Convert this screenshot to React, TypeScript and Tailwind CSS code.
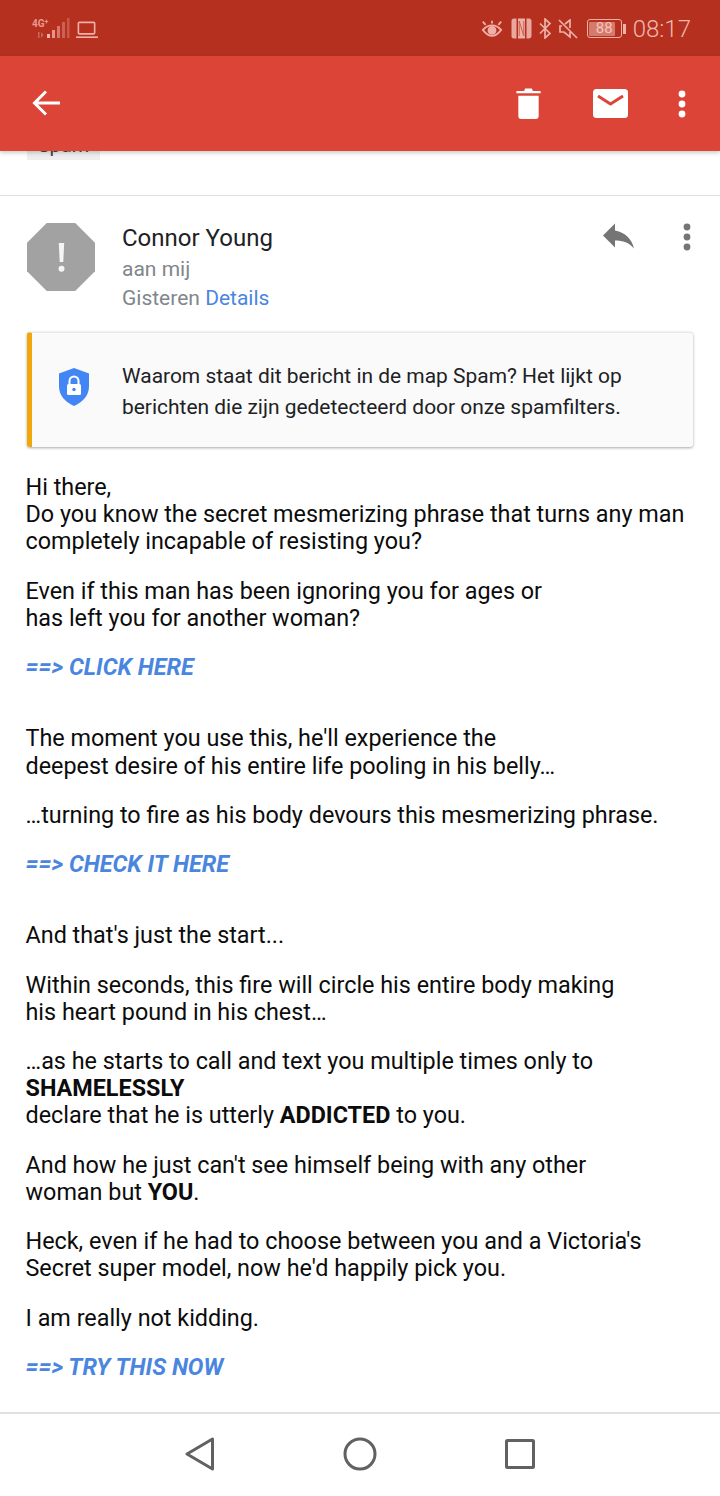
import React from "react";

const Dots = ({ className, fill }: { className: string; fill: string }) => (
  <svg viewBox="0 0 8 28" className={className} fill={fill}>
    <circle cx="4" cy="4" r="3.4" />
    <circle cx="4" cy="14" r="3.4" />
    <circle cx="4" cy="24" r="3.4" />
  </svg>
);

const StatusLeft = () => (
  <div className="flex items-end gap-[6px] ml-[32px] mt-[17px]">
    <svg width="38" height="22" viewBox="0 0 38 22">
      <text x="0" y="10" fontSize="10" fontWeight="700" fill="#e8998d" fontFamily="Roboto, sans-serif">4G</text>
      <text x="12.500" y="7" fontSize="7" fontWeight="700" fill="#e8998d" fontFamily="Roboto, sans-serif">+</text>
      <path d="M6 15h1.500v6H6zM9 15l2.500 3-2.500 3z" fill="#c96a5c" />
      <rect x="15" y="17" width="3" height="4" fill="#efb9b0" />
      <rect x="20" y="13" width="3" height="8" fill="#e59488" />
      <rect x="25" y="9" width="3" height="12" fill="#d9776a" />
      <rect x="30" y="5" width="3" height="16" fill="#cc6253" />
      <rect x="35" y="1" width="2.500" height="20" fill="#c8594a" />
    </svg>
    <svg width="22" height="18" viewBox="0 0 23 18" fill="none" stroke="#eeb0a7" strokeWidth="1.700">
      <rect x="2.500" y="1" width="17" height="12" rx="1" />
      <path d="M0 16.500h23" />
    </svg>
  </div>
);

const StatusRight = () => (
  <div className="flex items-center ml-auto mr-[29px] h-full pt-[1px]">
    <svg width="22" height="18" viewBox="0 0 24 18" fill="none" stroke="#eeb0a7" strokeWidth="2" className="mr-[8px]">
      <path d="M2 10C5 6.500 8 5 12 5s7 1.500 10 5C19 14 16 16.500 12 16.500S5 14 2 10z" />
      <circle cx="12" cy="10.500" r="3.800" fill="#eeb0a7" />
      <path d="M2 1l3 3.500M12 0v3M22 1l-3 3.500" />
    </svg>
    <svg width="21" height="21" viewBox="0 0 21 21" className="mr-[6px]">
      <path d="M3 .5h2.500v20H3A2.500 2.500 0 0 1 .5 18V3A2.500 2.500 0 0 1 3 .5zM18 .5h-2.500v20H18a2.500 2.500 0 0 0 2.500-2.500V3A2.500 2.500 0 0 0 18 .5z" fill="#e9a79d" />
      <rect x="7" y=".5" width="7" height="20" fill="#eeb0a7" />
      <path d="M8.200 3v15M12.800 3v15M8.200 3l4.600 15" fill="none" stroke="#c9604f" strokeWidth="1" />
    </svg>
    <svg width="14" height="21" viewBox="0 0 14 20" fill="none" stroke="#eeb0a7" strokeWidth="1.700" className="mr-[6px]">
      <path d="M2 5l10 10-5 4.500V.5L12 5 2 15" />
    </svg>
    <svg width="20" height="20" viewBox="0 0 20 20" fill="none" stroke="#eeb0a7" strokeWidth="1.700" className="mr-[9px]">
      <path d="M1 1l18 18M4 7H2v6h4l6 5v-5M7 5l5-4v8" />
    </svg>
    <div className="w-[35px] h-[19px] rounded-[3px] border border-[#eeb0a7] p-[1.500px] mr-[1px]">
      <div className="w-[26px] h-full bg-[#d67a6c] rounded-[1px] flex items-center justify-center text-[15px] leading-none text-[#f3c4bc] font-['Roboto',sans-serif]">
        <span className="ml-[4px]">88</span>
      </div>
    </div>
    <div className="w-[3px] h-[10px] bg-[#eeb0a7] mr-[7px]" />
    <span className="text-[24px] leading-none font-light text-[#f0b8af] font-['Roboto',sans-serif]">08:17</span>
  </div>
);

const Spam = () => (
  <div className="relative z-0 h-[66px] border-b border-[#e0e0e0]">
    <div className="ml-[27px] w-[73px] h-[30px] -mt-[21px] bg-[#eeeeee] flex items-center justify-center text-[20px] text-[#444444]">
      Spam
    </div>
  </div>
);

const Sender = () => (
  <div className="flex pl-[27px] pr-[29.500px] pt-[27px]">
    <div className="relative w-[68px] h-[68px] bg-[#a2a2a2] [clip-path:polygon(29%_0,71%_0,100%_29%,100%_71%,71%_100%,29%_100%,0_71%,0_29%)] flex items-center justify-center">
      <svg width="7" height="29" viewBox="0 0 7 29" fill="#f5f5f5">
        <path d="M.8 0h5.400l-.9 19H1.700z" />
        <circle cx="3.500" cy="25.800" r="3" />
      </svg>
    </div>
    <div className="ml-[27px] flex-1 -mt-[1px]">
      <div className="text-[24px] leading-[32px] text-[#202124]">Connor Young</div>
      <div className="text-[21px] leading-[29px] text-[#80868b] mt-[1px]">aan mij</div>
      <div className="text-[21px] leading-[29px] mt-0 text-[#80868b]">
        Gisteren <span className="text-[#4a86e0]">Details</span>
      </div>
    </div>
    <div className="flex items-start -mt-[1px]">
      <svg width="31" height="26" viewBox="0 0 31 25" fill="#757575" className="mt-[1px]">
        <path d="M12 0L0 12l12 12v-7c8 0 14 2 19 8-2-9-8-16-19-18z" />
      </svg>
      <Dots className="w-[8px] h-[28px] ml-[49px] mt-[1px]" fill="#757575" />
    </div>
  </div>
);

const Warning = () => (
  <div className="mx-[27px] mt-[19px] h-[115px] flex items-center bg-[#fafafa] rounded-[3px] border-l-[5px] border-l-[#f0a70a] border-t border-t-[#e8e8e8] shadow-[0_1px_3px_rgba(0,0,0,0.35)]">
    <svg width="30" height="38" viewBox="0 0 30 38" className="ml-[27px] shrink-0 mb-[6px]">
      <path d="M15 0l15 5.500v13C30 28 23 34.500 15 38 7 34.500 0 28 0 18.500v-13z" fill="#4285f4" />
      <rect x="8" y="16" width="14" height="11" rx="1.500" fill="#ffffff" />
      <path d="M10.500 16v-3a4.500 4.500 0 0 1 9 0v3" fill="none" stroke="#ffffff" strokeWidth="2" />
      <circle cx="15" cy="21.500" r="1.700" fill="#4285f4" />
    </svg>
    <div className="ml-[33px] mt-[4px] text-[20.950px] leading-[31px] text-[#202124] whitespace-nowrap">
      Waarom staat dit bericht in de map Spam? Het lijkt op
      <br />
      berichten die zijn gedetecteerd door onze spamfilters.
    </div>
  </div>
);

const P = ({ children, className = "mt-[22.150px]" }: { children: React.ReactNode; className?: string }) => (
  <p className={`${className} text-[23.360px] leading-[27.150px] text-[#0c0c0c] whitespace-nowrap`}>{children}</p>
);

const Lnk = ({ children, className = "mt-[22.150px]" }: { children: React.ReactNode; className?: string }) => (
  <p className={`${className} text-[23.360px] leading-[27.150px] font-bold italic text-[#4a86e0] whitespace-nowrap`}>{children}</p>
);

const Body = () => (
  <div className="pl-[25.500px] pr-[26px] mt-[27px]">
    <P className="mt-0">
      Hi there,
      <br />
      Do you know the secret mesmerizing phrase that turns any man
      <br />
      completely incapable of resisting you?
    </P>
    <P>
      Even if this man has been ignoring you for ages or
      <br />
      has left you for another woman?
    </P>
    <Lnk>==&gt; CLICK HERE</Lnk>
    <P className="mt-[44.150px]">
      The moment you use this, he'll experience the
      <br />
      deepest desire of his entire life pooling in his belly…
    </P>
    <P>…turning to fire as his body devours this mesmerizing phrase.</P>
    <Lnk>==&gt; CHECK IT HERE</Lnk>
    <P className="mt-[44.150px]">And that's just the start...</P>
    <P>
      Within seconds, this fire will circle his entire body making
      <br />
      his heart pound in his chest…
    </P>
    <P>
      …as he starts to call and text you multiple times only to
      <br />
      <b>SHAMELESSLY</b>
      <br />
      declare that he is utterly <b>ADDICTED</b> to you.
    </P>
    <P>
      And how he just can't see himself being with any other
      <br />
      woman but <b>YOU</b>.
    </P>
    <P>
      Heck, even if he had to choose between you and a Victoria's
      <br />
      Secret super model, now he'd happily pick you.
    </P>
    <P>I am really not kidding.</P>
    <Lnk>==&gt; TRY THIS NOW</Lnk>
  </div>
);

export default function App() {
  return (
    <div className="w-[720px] h-[1496px] flex flex-col overflow-hidden bg-white font-['Roboto',sans-serif]">
      <div className="h-[56px] shrink-0 bg-[#b5301f] flex items-start">
        <StatusLeft />
        <StatusRight />
      </div>
      <div className="relative z-10 h-[95px] shrink-0 bg-[#db4437] flex items-center shadow-[0_2px_4px_rgba(0,0,0,0.2)]">
        <svg width="28" height="28" viewBox="0 0 28 28" fill="none" stroke="#ffffff" strokeWidth="3" className="ml-[32px] mb-[2px]">
          <path d="M28 14H3M14 2.500L2.500 14 14 25.500" />
        </svg>
        <svg width="25" height="31" viewBox="0 0 25 32" fill="#ffffff" className="ml-auto">
          <path d="M0 3h8l1-2.500h7L17 3h8v2.500H0zM2 8h21v21a3 3 0 0 1-3 3H5a3 3 0 0 1-3-3z" />
        </svg>
        <svg width="35" height="29" viewBox="0 0 35 29" className="ml-[52px]">
          <rect width="35" height="29" rx="3.500" fill="#ffffff" />
          <path d="M5 7l12.500 8L30 7" fill="none" stroke="#db4437" strokeWidth="3" />
        </svg>
        <Dots className="w-[8px] h-[28px] ml-[50px] mr-[34px]" fill="#ffffff" />
      </div>
      <div className="flex-1 min-h-0 overflow-hidden">
        <Spam />
        <Sender />
        <Warning />
        <Body />
      </div>
      <div className="h-[84px] pb-[2px] shrink-0 border-t-2 border-[#e0e0e0] bg-white flex items-center">
        <svg width="30" height="34" viewBox="0 0 30 34" fill="none" stroke="#616161" strokeWidth="3" strokeLinejoin="round" className="ml-[185px]">
          <path d="M27.500 2v30L2 17z" />
        </svg>
        <svg width="34" height="34" viewBox="0 0 34 34" fill="none" stroke="#616161" strokeWidth="3" className="ml-[128px]">
          <circle cx="17" cy="17" r="15" />
        </svg>
        <svg width="30" height="30" viewBox="0 0 30 30" fill="none" stroke="#616161" strokeWidth="3" strokeLinejoin="round" className="ml-[128px]">
          <rect x="1.500" y="1.500" width="27" height="27" rx="1" />
        </svg>
      </div>
    </div>
  );
}
